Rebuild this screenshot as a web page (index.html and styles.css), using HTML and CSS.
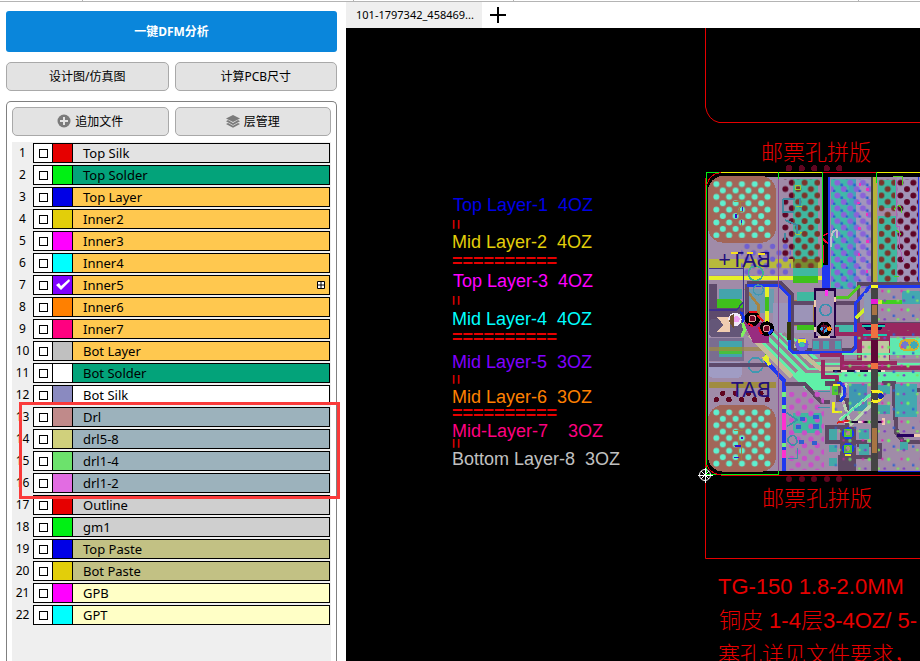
FILE: index.html
```html
<!DOCTYPE html>
<html lang="zh-CN">
<head>
  <meta charset="UTF-8" />
  <meta name="viewport" content="width=device-width, initial-scale=1.0" />
  <title>DFM</title>
  <link rel="stylesheet" href="styles.css">
</head>
<body>

<div class="topline"><span></span><span></span><span></span><span></span></div>

<div class="app">
  <aside class="sidebar">
    <button class="btn-primary">一键DFM分析</button>
    <div class="btn-row">
      <button class="btn">设计图/仿真图</button>
      <button class="btn">计算PCB尺寸</button>
    </div>

    <section class="panel">
      <div class="btn-row">
        <button class="btn">
          <svg width="14" height="14" viewBox="0 0 14 14"><circle cx="7" cy="7" r="6.500" fill="#7b7b7b"/><path d="M7 3v8M3 7h8" stroke="#e3e3e3" stroke-width="2"/></svg>
          追加文件
        </button>
        <button class="btn">
          <svg width="14" height="14" viewBox="0 0 14 14" fill="#7b7b7b"><path d="M7 1l7 3.500L7 8 0 4.500z"/><path d="M2 6L0 7.300 7 11l7-3.700L12 6 7 9z"/><path d="M2 9L0 10l7 3.700L14 10l-2-1-5 2.700z"/></svg>
          层管理
        </button>
      </div>

      <div class="layers" id="layers">
        <ol class="layer-list" id="layer-list"></ol>
        <div class="highlight"></div>
      </div>
    </section>
  </aside>

  <main class="viewer">
    <nav class="tabs">
      <button class="tab">101-1797342_458469...</button>
      <button class="tab-add" aria-label="+">
        <svg width="16" height="16" viewBox="0 0 16 16"><path d="M8 0v16M0 8h16" stroke="#000" stroke-width="2"/></svg>
      </button>
    </nav>

    <div class="canvas">
      <svg class="drawing" width="574" height="633" viewBox="346 28 574 633">
        <defs>
          <pattern id="mint" x="60" y="143" width="38.400" height="38.400" patternUnits="userSpaceOnUse">
            <g fill="#5ff0cf"><circle cx="19" cy="19" r="9"/><circle cx="0" cy="0" r="9"/><circle cx="38.400" cy="0" r="9"/><circle cx="0" cy="38.400" r="9"/><circle cx="38.400" cy="38.400" r="9"/></g>
          </pattern>
          <pattern id="wine" x="267" y="158" width="38.400" height="38.400" patternUnits="userSpaceOnUse">
            <g fill="#5e0526"><circle cx="19" cy="19" r="9"/><circle cx="0" cy="0" r="9"/><circle cx="38.400" cy="0" r="9"/><circle cx="0" cy="38.400" r="9"/><circle cx="38.400" cy="38.400" r="9"/></g>
          </pattern>
          <pattern id="brown" x="267" y="158" width="38.400" height="38.400" patternUnits="userSpaceOnUse">
            <g fill="#7c342a"><circle cx="19" cy="19" r="9"/><circle cx="0" cy="0" r="9"/><circle cx="38.400" cy="0" r="9"/><circle cx="0" cy="38.400" r="9"/><circle cx="38.400" cy="38.400" r="9"/></g>
          </pattern>
          <pattern id="violet" x="423" y="139" width="38.400" height="38.400" patternUnits="userSpaceOnUse">
            <g fill="#8a63d8"><circle cx="19" cy="19" r="9"/><circle cx="0" cy="0" r="9"/><circle cx="38.400" cy="0" r="9"/><circle cx="0" cy="38.400" r="9"/><circle cx="38.400" cy="38.400" r="9"/></g>
            <rect x="28" y="22" width="8" height="8" fill="#2c60d0"/><rect x="6" y="2" width="7" height="7" fill="#2c60d0"/>
          </pattern>
          <pattern id="blueviolet" x="152" y="330" width="38.400" height="38.400" patternUnits="userSpaceOnUse">
            <g fill="#7060d0"><circle cx="19" cy="19" r="8"/><circle cx="0" cy="0" r="8"/><circle cx="38.400" cy="0" r="8"/><circle cx="0" cy="38.400" r="8"/><circle cx="38.400" cy="38.400" r="8"/></g>
          </pattern>
          <pattern id="pink" x="286" y="774" width="38.400" height="38.400" patternUnits="userSpaceOnUse">
            <g fill="#c850c8"><circle cx="19" cy="19" r="8"/><circle cx="0" cy="0" r="8"/><circle cx="38.400" cy="0" r="8"/><circle cx="0" cy="38.400" r="8"/><circle cx="38.400" cy="38.400" r="8"/></g>
          </pattern>
          <pattern id="specks" x="570" y="470" width="58" height="56" patternUnits="userSpaceOnUse">
            <circle cx="26" cy="14" r="5" fill="#70f060"/><circle cx="54" cy="42" r="4" fill="#80e060"/>
            <rect x="4" y="10" width="6" height="6" fill="#e020b0"/><rect x="38" y="28" width="7" height="7" fill="#3060d0"/><circle cx="14" cy="42" r="4" fill="#8040c0"/>
          </pattern>
        </defs>

        <!-- board outline -->
        <g class="outline">
          <path d="M705.500 28V107Q708 120 719 122.500H920"/>
          <path d="M705.500 178V558.500H920"/>
        </g>

        <!-- board, drawn in thirds of a pixel -->
        <svg class="board" x="690" y="130" width="230" height="350" viewBox="0 0 690 1050">
          <path d="M54 1023V185Q54 140 100 140H690V1023H100Q54 1023 54 980z" fill="#a08ba8"/>

          <!-- upper copper -->
          <rect x="57" y="388" width="343" height="26" fill="#b7b93c"/>
          <rect x="57" y="418" width="110" height="18" fill="#9a98c0"/>
          <rect x="57" y="438" width="340" height="12" fill="#e6f028"/>
          <rect x="152" y="338" width="152" height="100" fill="url(#blueviolet)"/>
          <rect x="309" y="148" width="75" height="290" fill="#40b8a0"/>
          <rect x="309" y="388" width="75" height="26" fill="#788c30"/>
          <rect x="309" y="438" width="75" height="22" fill="#3fc01c"/>
          <rect x="276" y="148" width="34" height="240" fill="url(#wine)"/>
          <rect x="310" y="148" width="80" height="266" fill="url(#brown)"/>
          <path d="M278 208H315M278 208V246H312M285 270L320 285V312M285 310V330M330 205V235" stroke="#4088a0" stroke-width="6" fill="none"/>
          <path d="M316 165h14v14h-14zM318 228h18M316 310q10 10 18-4" stroke="#a0c830" stroke-width="3" fill="none"/>
          <rect x="396" y="140" width="20" height="270" fill="#000"/>
          <path d="M397 318L418 308M397 325L418 345M400 345V400" stroke="#f00030" stroke-width="5"/>
          <rect x="413" y="140" width="8" height="290" fill="#2038f0"/>
          <rect x="396" y="405" width="25" height="75" fill="#2038f0"/>
          <rect x="424" y="148" width="74" height="330" fill="#40b8a8"/>
          <rect x="477" y="148" width="21" height="330" fill="#42a4b8"/>
          <rect x="498" y="148" width="46" height="320" fill="#a296bc"/>
          <rect x="424" y="148" width="120" height="330" fill="url(#violet)"/>
          <path d="M510 160v8M532 175v9M505 215v8M530 250v9M508 290v9M532 330v9M506 370v8M530 420v8" stroke="#f030c0" stroke-width="7"/>
          <path d="M440 300Q420 300 424 350M440 300V325" stroke="#c0c0c8" stroke-width="5" fill="none"/>
          <rect x="543" y="140" width="7" height="330" fill="#404040"/>
          <rect x="550" y="140" width="12" height="330" fill="#b8b238"/>
          <rect x="563" y="150" width="58" height="305" fill="#40b8a0"/>
          <rect x="563" y="234" width="58" height="24" fill="#a08ba8"/>
          <rect x="621" y="140" width="64" height="318" fill="#a194b8"/>
          <rect x="566" y="148" width="50" height="310" fill="url(#brown)"/>
          <g transform="translate(0 -19)"><rect x="622" y="167" width="62" height="310" fill="url(#wine)"/></g>
          <path d="M610 139h26v26M612 240q20-30 24 10M620 300l14 14M612 440h14" stroke="#50d020" stroke-width="3" fill="none"/>
          <path d="M618 150V290H628V345L640 395" stroke="#b060b8" stroke-width="3" fill="none"/>
          <rect x="684" y="140" width="4" height="316" fill="#2038f0"/>
          <rect x="563" y="459" width="127" height="8" fill="#4870b0"/>

          <!-- middle copper -->
          <path d="M57 462H80V535H160V580H57z" fill="#5e4a6c"/>
          <rect x="87" y="478" width="68" height="30" fill="#44a4ac"/>
          <path d="M82 508H150L160 520V535H82z" fill="#3fc01c"/>
          <path d="M57 540H140L160 515M160 410V560M57 416H160" stroke="#40308c" stroke-width="4" fill="none"/>
          <rect x="57" y="568" width="105" height="52" rx="10" fill="#645678"/>
          <path d="M82 562H120V605H82L100 585z" fill="#f0ccb0"/>
          <rect x="57" y="624" width="105" height="70" fill="#7a6d90"/>
          <rect x="87" y="632" width="68" height="50" fill="#44a4ac"/>
          <rect x="87" y="650" width="68" height="22" fill="#48c040"/>
          <rect x="57" y="650" width="200" height="14" fill="#a08c40" opacity=".7"/>
          <rect x="172" y="478" width="80" height="70" fill="#6c9cb0"/>
          <rect x="250" y="520" width="120" height="90" fill="#9c94b8"/>
          <rect x="225" y="470" width="13" height="240" fill="#e6f028"/>
          <rect x="225" y="502" width="13" height="40" fill="#3fc01c"/>
          <rect x="225" y="640" width="13" height="34" fill="#3fc01c"/>
          <path d="M165 475L205 525V575M305 515H372V585H310z" stroke="#a88440" stroke-width="8" fill="none"/>
          <rect x="322" y="486" width="50" height="28" fill="#40b8a0"/>
          <rect x="322" y="585" width="50" height="14" fill="#3fc01c"/>
          <path d="M300 518H500M300 580H690M170 462V580" stroke="#604868" stroke-width="11"/>
          <path d="M160 590L350 780H690V700H400L310 620L240 600z" fill="#60f0a8"/>
          <path d="M160 600L290 730M185 590L320 725M215 590L350 725H690M250 600L360 708H690M280 610L370 692H690" stroke="#9c7f94" stroke-width="9" fill="none"/>
          <path d="M180 615L305 740M300 640L390 716H500" stroke="#c4bc98" stroke-width="13" fill="none"/>
          <path d="M172 458H272L305 492V660H485L505 640V462H690" stroke="#5a4464" stroke-width="11" fill="none"/>
          <path d="M172 467H268L297 496V655L308 666H485L496 655V520L540 470H690" stroke="#2038f0" stroke-width="9" fill="none"/>
          <path d="M297 575V630" stroke="#303808" stroke-width="12"/>
          <path d="M420 502H475L510 466" stroke="#50c820" stroke-width="9" fill="none"/>
          <path d="M498 565L545 515H690" stroke="#d0f028" stroke-width="11" fill="none"/>
          <path d="M575 516H650" stroke="#40d020" stroke-width="11"/>
          <path d="M374 478H434V620H374z" fill="#a08bb0" stroke="#240048" stroke-width="7"/>
          <path d="M374 510V530M434 500V515M374 590V605M384 620H420" stroke="#f0ccb0" stroke-width="7"/>
          <path d="M410 480V498" stroke="#ff30f0" stroke-width="9"/>
          <circle cx="407" cy="540" r="17" fill="none" stroke="#3890b0" stroke-width="5"/>
          <circle cx="197" cy="430" r="22" fill="none" stroke="#40b090" stroke-width="5"/>
          <circle cx="197" cy="705" r="22" fill="none" stroke="#4098b0" stroke-width="5"/>
          <circle cx="205" cy="480" r="15" fill="none" stroke="#4098b0" stroke-width="4"/>
          <circle cx="403" cy="597" r="22" fill="#000"/><circle cx="402" cy="597" r="11" fill="#38a0e0"/>
          <path d="M392 607L414 588M392 588H412M400 580V612" stroke="#600828" stroke-width="4"/>
          <circle cx="418" cy="596" r="7" fill="#ff8000"/>
          <circle cx="336" cy="644" r="20" fill="#7060d8"/><path d="M325 628h22v12h-22z" fill="#e8f020"/><circle cx="336" cy="644" r="8" fill="#40c0b0"/>
          <circle cx="135" cy="568" r="20" fill="#f0e8f8"/><path d="M118 575q0-22 14-22v44z" fill="#705030"/><circle cx="140" cy="568" r="9" fill="#f0a0f0"/>
          <path d="M150 546q16 6 8 34" stroke="#1030e8" stroke-width="7" fill="none"/>
          <path d="M160 575H220L238 600V640H190z" fill="#982c80"/>
          <circle cx="187" cy="566" r="23" fill="#000"/><circle cx="187" cy="566" r="10" fill="#780828" stroke="#e0a0a0" stroke-width="3"/>
          <circle cx="230" cy="596" r="22" fill="#000"/><circle cx="230" cy="596" r="10" fill="#780828" stroke="#e0a0a0" stroke-width="3"/>
          <path d="M178 546H200M202 556L220 575M175 580L190 590M205 590L215 612" stroke="#f01018" stroke-width="6"/>
          <path d="M236 612L248 598" stroke="#1030e8" stroke-width="8"/>
          <path d="M158 578L164 600L155 620" stroke="#80f060" stroke-width="9" fill="none"/>

          <!-- right-hand traces -->
          <path d="M500 580H690V610H600V690H500z" fill="#982860"/>
          <rect x="516" y="632" width="80" height="60" fill="#c0c8a0"/>
          <rect x="600" y="625" width="90" height="50" fill="#60e8b0"/>
          <rect x="628" y="628" width="58" height="34" rx="14" fill="#d0b030"/><circle cx="645" cy="645" r="11" fill="#7078d0"/><circle cx="672" cy="645" r="11" fill="#40a8b8"/>
          <rect x="366" y="626" width="90" height="36" fill="#806890"/>
          <path d="M370 632h18v24h-18zM400 632h18v24h-18zM436 632h18v24h-18z" fill="#40a8b0"/>
          <rect x="436" y="586" width="52" height="24" fill="#44b8a8"/>
          <path d="M390 675H455V715H690M400 690V740H440V790M440 590V612H690M450 700H620" stroke="#982860" stroke-width="12" fill="none"/>
          <path d="M455 672H690M455 730H690" stroke="#60f0a8" stroke-width="8"/>
          <path d="M515 582H585L572 600H528z" fill="#280048"/><path d="M515 588H585M520 615H590" stroke="#18c8b0" stroke-width="6"/>
          <rect x="636" y="482" width="54" height="40" fill="#44a8b0"/>
          <rect x="522" y="490" width="38" height="80" fill="#8c98b8"/>

          <!-- lower copper -->
          <rect x="57" y="695" width="98" height="48" rx="12" fill="#a09cc4"/>
          <path d="M57 706H240" stroke="#5e4a6c" stroke-width="12"/>
          <rect x="57" y="757" width="200" height="17" fill="#a08c40"/>
          <path d="M225 690L282 752V1023" stroke="#2038f0" stroke-width="12" fill="none"/>
          <path d="M220 680L240 705" stroke="#e6f028" stroke-width="10"/>
          <path d="M282 850V900M282 960V985" stroke="#ff30d0" stroke-width="10"/>
          <path d="M282 785V800M282 825V838M282 940V950" stroke="#70f080" stroke-width="10"/>
          <path d="M285 762H345L392 815H430" stroke="#5e4864" stroke-width="12" fill="none"/>
          <rect x="309" y="850" width="86" height="58" fill="#40b8a0"/>
          <rect x="296" y="785" width="105" height="235" fill="url(#pink)"/>
          <path d="M330 860h16v12h-16zM370 855h16v12h-16zM318 885h14v12h-14zM368 882h18v14h-18zM328 930h14v12h-14zM366 934h14v12h-14z" fill="#3060d0"/>
          <path d="M290 848L322 870L290 890M292 930Q312 900 322 935Q310 960 292 930M295 985H322V955M384 784H430M384 832H430" stroke="#4090a8" stroke-width="5" fill="none"/>
          <rect x="420" y="755" width="270" height="268" fill="#a08ba8"/>
          <path d="M405 760H445V810H470V890H412V935H530M575 760H612V800L620 910L640 935H690M500 945H570V980H450V1023M625 780H690" stroke="#5e4864" stroke-width="13" fill="none"/>
          <rect x="478" y="762" width="54" height="80" fill="#4098b0"/>
          <rect x="615" y="762" width="66" height="100" fill="#44a8b0"/>
          <path d="M565 765h34v28h-34zM565 825h34v28h-34zM508 898h30v28h-30zM508 942h30v34h-30zM418 898h22v32h-22zM418 945h22v22h-22zM418 985h22v22h-22zM460 985h26v26h-26zM630 935h24v24h-24z" fill="#44a8a8"/>
          <path d="M448 870L560 780M480 885L570 800M470 760L455 800L478 870" stroke="#b8d8b0" stroke-width="9" fill="none"/>
          <path d="M452 870L545 790" stroke="#60f0a8" stroke-width="7"/>
          <path d="M440 760Q470 755 462 800L450 815" stroke="#1838f0" stroke-width="9" fill="none"/>
          <path d="M430 765H450M430 815V850M435 845H455" stroke="#f0f020" stroke-width="7"/>
          <rect x="427" y="768" width="18" height="26" fill="#50c830"/>
          <path d="M430 722H585M450 875H580" stroke="#f0e0c8" stroke-width="6"/>
          <path d="M430 722H585M480 875H585" stroke="#1c0838" stroke-width="6" stroke-dasharray="24 16"/>
          <path d="M440 878L480 872" stroke="#e02018" stroke-width="6"/>
          <path d="M580 865V885" stroke="#f0ccb0" stroke-width="9"/>
          <rect x="451" y="890" width="46" height="133" fill="#5e4864"/>
          <circle cx="474" cy="910" r="18" fill="#1838f0"/><circle cx="474" cy="956" r="18" fill="#1838f0"/>
          <rect x="462" y="898" width="24" height="24" fill="#50c830"/><rect x="462" y="944" width="24" height="24" fill="#50c830"/>
          <circle cx="474" cy="910" r="7" fill="#b09080"/><circle cx="474" cy="956" r="7" fill="#b09080"/>
          <path d="M466 974H482" stroke="#f0f020" stroke-width="5"/>
          <path d="M620 916H690" stroke="#280060" stroke-width="7"/><path d="M672 916H690" stroke="#f0ccb0" stroke-width="9"/>
          <rect x="563" y="478" width="127" height="110" fill="url(#specks)"/>
          <rect x="502" y="600" width="188" height="420" fill="url(#specks)"/>
          <rect x="430" y="690" width="72" height="320" fill="url(#specks)" opacity=".7"/>

          <!-- vertical bus -->
          <rect x="543" y="468" width="21" height="555" fill="#444"/>
          <path d="M553 525V555M553 895V970" stroke="#a87444" stroke-width="17"/>
          <path d="M553 508V522" stroke="#e818d8" stroke-width="19"/>
          <path d="M553 582V625M553 700V718" stroke="#f07040" stroke-width="19"/>
          <path d="M553 630V700" stroke="#600838" stroke-width="19"/>
          <path d="M545 785Q580 780 575 800Q570 820 545 812" stroke="#f8f020" stroke-width="9" fill="none"/>
          <circle cx="572" cy="798" r="9" fill="#1828b0"/>
          <path d="M543 469H563" stroke="#f8f820" stroke-width="8"/>

          <!-- battery pads -->
          <path d="M54 138H100L54 185z" fill="#000"/>
          <rect x="54" y="138" width="204" height="200" rx="46" fill="#a26558"/>
          <rect x="70" y="153" width="172" height="172" fill="url(#mint)"/>
          <path d="M54 975Q60 1023 100 1025H54z" fill="#000"/>
          <rect x="54" y="825" width="204" height="200" rx="46" fill="#a26558"/>
          <g transform="translate(0 685)"><rect x="70" y="153" width="172" height="172" fill="url(#mint)"/></g>
          <path d="M132 215H165M150 215V235L138 262M140 245H160M155 270V290M132 900H158M145 900V1000M132 945H158M155 935V990" stroke="#a08040" stroke-width="3" fill="none"/>
          <path d="M158 230v12M138 252v12M155 270v10M156 920v8M136 948h16M132 982h16" stroke="#3010d0" stroke-width="4"/>
          <g fill="#600520"><circle cx="79" cy="809" r="8"/><circle cx="117" cy="809" r="8"/><circle cx="155" cy="809" r="8"/><circle cx="194" cy="809" r="8"/><circle cx="232" cy="809" r="8"/><circle cx="98" cy="790" r="8"/><circle cx="136" cy="790" r="8"/><circle cx="175" cy="790" r="8"/><circle cx="213" cy="790" r="8"/></g>
          <text class="pad-name" transform="translate(242 800) scale(-1 1)">BAT</text>
          <text class="pad-name" transform="translate(242 412) scale(-1 1)">BAT+</text>
          <path d="M124 369h20M170 369h20M205 371h20" stroke="#f8e020" stroke-width="5"/>

          <!-- cut lines -->
          <path d="M265 140V1023" stroke="#8c4898" stroke-width="3"/>
          <path d="M49 127H690" stroke="#f0f000" stroke-width="3"/>
          <path d="M398 127H560" stroke="#f00010" stroke-width="3"/>
          <path d="M49 1033V127H90M265 127V148M398 127V410M560 127V160M49 1033H265V1022" stroke="#00f010" stroke-width="3" fill="none"/>
          <path d="M50 165Q60 130 92 128M50 1005Q62 1034 100 1036H690M46 165V1030" stroke="#e00008" stroke-width="3" fill="none"/>
          <path d="M563 1024H690" stroke="#1018d8" stroke-width="3"/>
          <g fill="#600520"><circle cx="297" cy="115" r="9.500"/><circle cx="335" cy="115" r="9.500"/><circle cx="373" cy="115" r="9.500"/><circle cx="410" cy="115" r="9.500"/><circle cx="448" cy="115" r="9.500"/></g>
        </svg>

        <g fill="#600520"><circle cx="789" cy="479" r="3"/><circle cx="802" cy="479" r="3"/><circle cx="814" cy="479" r="3"/><circle cx="827" cy="479" r="3"/><circle cx="839" cy="479" r="3"/></g>
        <g class="origin"><circle cx="705" cy="475" r="5.500"/><path d="M698 475.500H713M705.500 468V483M701 471L709 479M709 471L701 479"/></g>

        <!-- stack-up -->
        <g class="stackup">
          <text x="453" y="211" fill="#0000e6">Top Layer-1  4OZ</text>
          <text x="452" y="248" fill="#e2ce0a">Mid Layer-2  4OZ</text>
          <text x="453" y="287" fill="#ff00ff">Top Layer-3  4OZ</text>
          <text x="452" y="325" fill="#00ffff">Mid Layer-4  4OZ</text>
          <text x="452" y="368" fill="#8000ff">Mid Layer-5  3OZ</text>
          <text x="452" y="403" fill="#ff8000">Mid Layer-6  3OZ</text>
          <text x="452" y="437" fill="#ff0080">Mid-Layer-7    3OZ</text>
          <text x="452" y="465" fill="#c0c0c0">Bottom Layer-8  3OZ</text>
          <text class="gap" x="452" y="267">==========</text>
          <text class="gap" x="452" y="343">==========</text>
          <text class="gap" x="452" y="419">==========</text>
          <text transform="translate(450 219) rotate(90)">=</text>
          <text transform="translate(450 295) rotate(90)">=</text>
          <text transform="translate(450 374) rotate(90)">=</text>
          <text transform="translate(450 438) rotate(90)">=</text>
        </g>

        <g class="notes">
          <text x="761" y="160">邮票孔拼版</text>
          <text x="762" y="506">邮票孔拼版</text>
          <text x="718" y="594">TG-150 1.8-2.0MM</text>
          <text x="719" y="628">铜皮 1-4层3-4OZ/ 5-</text>
          <text x="718" y="662">塞孔详见文件要求，</text>
        </g>
      </svg>
    </div>
  </main>
</div>

<script src="layers.js"></script>
</body>
</html>
```

FILE: styles.css
```css
* {
  box-sizing: border-box;
}
body {
  margin: 0;
  height: 100vh;
  display: flex;
  flex-direction: column;
  overflow: hidden;
  background: #fff;
  color: #000;
  font-family: "Noto Sans", "Noto Sans CJK SC", sans-serif;
  font-size: 12px;
}
button {
  font: inherit;
  color: inherit;
  padding: 0;
  cursor: pointer;
}
.topline {
  flex: none;
  display: flex;
  height: 2px;
  border-bottom: 1px solid #b4b4b4;
}
.topline span {
  width: 160px;
  border-right: 1px solid #b4b4b4;
}
.topline span:first-child {
  width: 83px;
}
.topline span:nth-child(2) {
  width: 271px;
}
.topline span:last-child {
  width: 345px;
}
.app {
  flex: 1;
  display: flex;
  min-height: 0;
}

/* Sidebar */
.sidebar {
  flex: none;
  width: 346px;
  display: flex;
  flex-direction: column;
  gap: 10px;
  padding: 9px 9px 0 6px;
}
.btn-primary {
  flex: none;
  height: 41px;
  padding-bottom: 2px;
  border: none;
  border-radius: 3px;
  background: #0a86db;
  color: #fff;
  font-weight: 700;
}
.btn-row {
  flex: none;
  display: flex;
  gap: 6px;
}
.btn {
  flex: 1;
  display: flex;
  align-items: center;
  justify-content: center;
  gap: 4px;
  height: 29px;
  padding-bottom: 1px;
  border: 1px solid #a9a9a9;
  border-radius: 5px;
  background: #e3e3e3;
}
.panel {
  flex: 1;
  display: flex;
  flex-direction: column;
  gap: 6px;
  min-height: 0;
  padding: 5px 5px 0;
  border: 1px solid #808080;
  border-bottom: none;
  border-radius: 5px 5px 0 0;
}

/* Layer list */
.layers {
  position: relative;
  flex: 1;
  background: #efefef;
}
.layer-list {
  display: flex;
  flex-direction: column;
  gap: 2px;
  margin: 0;
  padding: 1px 1px 0 0;
  list-style: none;
}
.layer {
  display: flex;
  height: 20px;
  line-height: 18px;
}
.layer-no {
  width: 21px;
  line-height: 20px;
  text-align: center;
}
.layer-box {
  flex: 1;
  display: flex;
  border: 1px solid #000;
}
.layer-check {
  width: 18px;
  display: flex;
  align-items: center;
  justify-content: center;
  background: #fff;
}
.layer-check input {
  appearance: none;
  width: 9px;
  height: 9px;
  margin: 0;
  border: 1px solid #000;
  background: #fff;
}
.layer-check input:checked {
  background: #000;
}
.swatch {
  width: 21px;
  display: flex;
  align-items: center;
  justify-content: center;
  border: 1px solid #000;
  border-width: 0 1px;
}
.layer-name {
  flex: 1;
  display: flex;
  align-items: center;
  justify-content: space-between;
  padding: 0 4px 0 10px;
  font-size: 13px;
}
.silk { background: #e3e3e3; }
.solder { background: #03a37a; }
.copper { background: #ffc84f; }
.plain { background: #fff; }
.drill { background: #9cb2bc; }
.mech { background: #cfcfcf; }
.paste { background: #c2c184; }
.other { background: #ffffc6; }
.highlight {
  position: absolute;
  left: 7px;
  top: 260px;
  width: 321px;
  height: 97px;
  border: 3px solid #fa3a3a;
  pointer-events: none;
}

/* Viewer */
.viewer {
  flex: 1;
  min-width: 0;
  display: flex;
  flex-direction: column;
}
.tabs {
  flex: none;
  display: flex;
  height: 26px;
}
.tab {
  width: 136px;
  padding: 0 10px 1px;
  border: none;
  background: #efefef;
  font-size: 11px;
  text-align: left;
  white-space: nowrap;
}
.tab-add {
  display: flex;
  align-items: center;
  width: 32px;
  padding: 0 8px;
  border: none;
  background: none;
}
.canvas {
  flex: 1;
  min-height: 0;
  overflow: hidden;
  background: #000;
}
.drawing {
  display: block;
}
.board {
  shape-rendering: crispEdges;
}
.outline {
  fill: none;
  stroke: #e60000;
}
.origin {
  fill: none;
  stroke: #fff;
}
.pad-name {
  font-family: "Liberation Sans", sans-serif;
  font-size: 64px;
  fill: #24107c;
}
.stackup text {
  font-family: "Liberation Sans", sans-serif;
  font-size: 18px;
  white-space: pre;
}
.stackup {
  fill: #e60000;
}
.stackup .gap {
  font-weight: 700;
}
.notes {
  font-family: "Liberation Sans", "Noto Sans CJK SC", sans-serif;
  font-size: 22px;
  font-weight: 300;
  fill: #e60000;
}
```

FILE: layers.js
```js
const layers = [
  ['Top Silk', 'silk', '#e60000'],
  ['Top Solder', 'solder', '#00f014'],
  ['Top Layer', 'copper', '#0000e6'],
  ['Inner2', 'copper', '#e2ce0a'],
  ['Inner3', 'copper', '#ff00ff'],
  ['Inner4', 'copper', '#00ffff'],
  ['Inner5', 'copper', '#8000ff'],
  ['Inner6', 'copper', '#ff8000'],
  ['Inner7', 'copper', '#ff0080'],
  ['Bot Layer', 'copper', '#c0c0c0'],
  ['Bot Solder', 'solder', '#ffffff'],
  ['Bot Silk', 'plain', '#8a8ac0'],
  ['Drl', 'drill', '#c08a8a'],
  ['drl5-8', 'drill', '#d0d07c'],
  ['drl1-4', 'drill', '#6ce26c'],
  ['drl1-2', 'drill', '#e26ce2'],
  ['Outline', 'mech', '#e60000'],
  ['gm1', 'mech', '#00f014'],
  ['Top Paste', 'paste', '#0000e6'],
  ['Bot Paste', 'paste', '#e2ce0a'],
  ['GPB', 'other', '#ff00ff'],
  ['GPT', 'other', '#00ffff']
];
const active = 'Inner5';

const tick = '<svg width="14" height="12" viewBox="0 0 14 12"><path d="M0 6l3-2 2 3 8-7 1 2-9 9z" fill="#fff"/></svg>';
const grid = '<svg width="8" height="8" viewBox="0 0 8 8"><path d="M.5.5h7v7h-7zM4 0v8M0 4h8" fill="#fff" stroke="#000"/></svg>';

document.getElementById('layer-list').innerHTML = layers.map(([name, type, color], i) => `
  <li class="layer">
    <span class="layer-no">${i + 1}</span>
    <div class="layer-box">
      <span class="layer-check"><input type="checkbox" id="layer-${i + 1}"></span>
      <span class="swatch" style="background:${color}">${name === active ? tick : ''}</span>
      <label class="layer-name ${type}" for="layer-${i + 1}">${name}${name === active ? grid : ''}</label>
    </div>
  </li>`).join('');
```
